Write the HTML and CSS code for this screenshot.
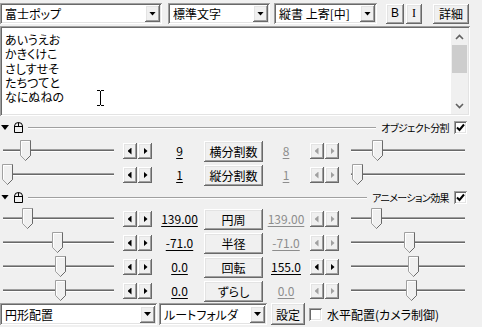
FILE: index.html
```html
<!DOCTYPE html>
<html lang="ja">
<head>
    <meta charset="UTF-8">
    <meta name="viewport" content="width=device-width, initial-scale=1.0">
    <title>テキスト</title>
    <link rel="stylesheet" href="styles.css">
</head>
<body>
    <div class="panel">
        <div class="toolbar">
            <div class="combo combo-font"><span class="combo-text">富士ポップ</span><span class="drop"><i class="tri-down"></i></span></div>
            <div class="combo combo-style"><span class="combo-text">標準文字</span><span class="drop"><i class="tri-down"></i></span></div>
            <div class="combo combo-align"><span class="combo-text">縦書 上寄[中]</span><span class="drop"><i class="tri-down"></i></span></div>
            <button class="btn btn-b">B</button>
            <button class="btn btn-i">I</button>
            <button class="btn btn-detail">詳細</button>
        </div>

        <div class="editor">
            <div class="editor-text">あいうえお<br>かきくけこ<br>さしすせそ<br>たちつてと<br>なにぬねの</div>
            <svg class="ibeam" width="7" height="16" viewBox="0 0 7 16"><path d="M0 0.5H3M4 0.5H7M3.5 1V15M0 15.5H3M4 15.5H7" fill="none" stroke="#000"/></svg>
            <div class="vscroll">
                <span class="sb-arrow"><svg width="9" height="6" viewBox="0 0 9 6"><path d="M1 5L4.5 1.5L8 5" fill="none" stroke="#606060" stroke-width="1.6"/></svg></span>
                <span class="sb-thumb"></span>
                <span class="sb-space"></span>
                <span class="sb-arrow"><svg width="9" height="6" viewBox="0 0 9 6"><path d="M1 1L4.5 4.5L8 1" fill="none" stroke="#606060" stroke-width="1.6"/></svg></span>
            </div>
        </div>

        <div class="group-head">
            <i class="tri-open"></i>
            <svg class="mouse" width="9" height="11" viewBox="0 0 9 11"><path d="M0.5 4Q0.5 0.5 4.5 0.5Q8.5 0.5 8.5 4V10.5H0.5ZM0.5 4.5H8.5M4.5 0.5V4.5" fill="none" stroke="#000"/></svg>
            <span class="rule"></span>
            <span class="group-label">オブジェクト分割</span>
            <span class="check"><svg width="9" height="9" viewBox="0 0 9 9"><path d="M1 4.5L3.5 7L8 1.5" fill="none" stroke="#000" stroke-width="2"/></svg></span>
        </div>

        <div class="row">
            <div class="slider"><span class="track"></span><svg class="thumb" style="left:20px" width="11" height="21" viewBox="0 0 11 21"><path d="M0.5 15.5V0.5H10.5V15.5L5.5 20.5Z" fill="#f0f0f0" stroke="#a0a0a0"/><path d="M10.5 0.5V15.5L5.5 20.5" fill="none" stroke="#696969"/><path d="M1.5 15V1.5H9.5" fill="none" stroke="#fff"/></svg></div>
            <span class="spin"><span class="spin-btn"><i class="tri-left"></i></span><span class="spin-btn"><i class="tri-right"></i></span></span>
            <span class="value">9</span>
            <button class="btn param">横分割数</button>
            <span class="value value-r off">8</span>
            <span class="spin off"><span class="spin-btn"><i class="tri-left"></i></span><span class="spin-btn"><i class="tri-right"></i></span></span>
            <div class="slider slider-r"><span class="track"></span><svg class="thumb" style="left:33px" width="11" height="21" viewBox="0 0 11 21"><path d="M0.5 15.5V0.5H10.5V15.5L5.5 20.5Z" fill="#f0f0f0" stroke="#a0a0a0"/><path d="M10.5 0.5V15.5L5.5 20.5" fill="none" stroke="#696969"/><path d="M1.5 15V1.5H9.5" fill="none" stroke="#fff"/></svg></div>
        </div>
        <div class="row">
            <div class="slider"><span class="track"></span><svg class="thumb" style="left:2px" width="11" height="21" viewBox="0 0 11 21"><path d="M0.5 15.5V0.5H10.5V15.5L5.5 20.5Z" fill="#f0f0f0" stroke="#a0a0a0"/><path d="M10.5 0.5V15.5L5.5 20.5" fill="none" stroke="#696969"/><path d="M1.5 15V1.5H9.5" fill="none" stroke="#fff"/></svg></div>
            <span class="spin"><span class="spin-btn"><i class="tri-left"></i></span><span class="spin-btn"><i class="tri-right"></i></span></span>
            <span class="value">1</span>
            <button class="btn param">縦分割数</button>
            <span class="value value-r off">1</span>
            <span class="spin off"><span class="spin-btn"><i class="tri-left"></i></span><span class="spin-btn"><i class="tri-right"></i></span></span>
            <div class="slider slider-r"><span class="track"></span><svg class="thumb" style="left:13px" width="11" height="21" viewBox="0 0 11 21"><path d="M0.5 15.5V0.5H10.5V15.5L5.5 20.5Z" fill="#f0f0f0" stroke="#a0a0a0"/><path d="M10.5 0.5V15.5L5.5 20.5" fill="none" stroke="#696969"/><path d="M1.5 15V1.5H9.5" fill="none" stroke="#fff"/></svg></div>
        </div>

        <div class="group-head group-head-2">
            <i class="tri-open"></i>
            <svg class="mouse" width="9" height="11" viewBox="0 0 9 11"><path d="M0.5 4Q0.5 0.5 4.5 0.5Q8.5 0.5 8.5 4V10.5H0.5ZM0.5 4.5H8.5M4.5 0.5V4.5" fill="none" stroke="#000"/></svg>
            <span class="rule"></span>
            <span class="group-label">アニメーション効果</span>
            <span class="check"><svg width="9" height="9" viewBox="0 0 9 9"><path d="M1 4.5L3.5 7L8 1.5" fill="none" stroke="#000" stroke-width="2"/></svg></span>
        </div>

        <div class="row">
            <div class="slider"><span class="track"></span><svg class="thumb" style="left:22px" width="11" height="21" viewBox="0 0 11 21"><path d="M0.5 15.5V0.5H10.5V15.5L5.5 20.5Z" fill="#f0f0f0" stroke="#a0a0a0"/><path d="M10.5 0.5V15.5L5.5 20.5" fill="none" stroke="#696969"/><path d="M1.5 15V1.5H9.5" fill="none" stroke="#fff"/></svg></div>
            <span class="spin"><span class="spin-btn"><i class="tri-left"></i></span><span class="spin-btn"><i class="tri-right"></i></span></span>
            <span class="value">139.00</span>
            <button class="btn param">円周</button>
            <span class="value value-r off">139.00</span>
            <span class="spin off"><span class="spin-btn"><i class="tri-left"></i></span><span class="spin-btn"><i class="tri-right"></i></span></span>
            <div class="slider slider-r"><span class="track"></span><svg class="thumb" style="left:32px" width="11" height="21" viewBox="0 0 11 21"><path d="M0.5 15.5V0.5H10.5V15.5L5.5 20.5Z" fill="#f0f0f0" stroke="#a0a0a0"/><path d="M10.5 0.5V15.5L5.5 20.5" fill="none" stroke="#696969"/><path d="M1.5 15V1.5H9.5" fill="none" stroke="#fff"/></svg></div>
        </div>
        <div class="row">
            <div class="slider"><span class="track"></span><svg class="thumb" style="left:52px" width="11" height="21" viewBox="0 0 11 21"><path d="M0.5 15.5V0.5H10.5V15.5L5.5 20.5Z" fill="#f0f0f0" stroke="#a0a0a0"/><path d="M10.5 0.5V15.5L5.5 20.5" fill="none" stroke="#696969"/><path d="M1.5 15V1.5H9.5" fill="none" stroke="#fff"/></svg></div>
            <span class="spin"><span class="spin-btn"><i class="tri-left"></i></span><span class="spin-btn"><i class="tri-right"></i></span></span>
            <span class="value">-71.0</span>
            <button class="btn param">半径</button>
            <span class="value value-r off">-71.0</span>
            <span class="spin off"><span class="spin-btn"><i class="tri-left"></i></span><span class="spin-btn"><i class="tri-right"></i></span></span>
            <div class="slider slider-r"><span class="track"></span><svg class="thumb" style="left:65px" width="11" height="21" viewBox="0 0 11 21"><path d="M0.5 15.5V0.5H10.5V15.5L5.5 20.5Z" fill="#f0f0f0" stroke="#a0a0a0"/><path d="M10.5 0.5V15.5L5.5 20.5" fill="none" stroke="#696969"/><path d="M1.5 15V1.5H9.5" fill="none" stroke="#fff"/></svg></div>
        </div>
        <div class="row">
            <div class="slider"><span class="track"></span><svg class="thumb" style="left:55px" width="11" height="21" viewBox="0 0 11 21"><path d="M0.5 15.5V0.5H10.5V15.5L5.5 20.5Z" fill="#f0f0f0" stroke="#a0a0a0"/><path d="M10.5 0.5V15.5L5.5 20.5" fill="none" stroke="#696969"/><path d="M1.5 15V1.5H9.5" fill="none" stroke="#fff"/></svg></div>
            <span class="spin"><span class="spin-btn"><i class="tri-left"></i></span><span class="spin-btn"><i class="tri-right"></i></span></span>
            <span class="value">0.0</span>
            <button class="btn param">回転</button>
            <span class="value value-r">155.0</span>
            <span class="spin"><span class="spin-btn"><i class="tri-left"></i></span><span class="spin-btn"><i class="tri-right"></i></span></span>
            <div class="slider slider-r"><span class="track"></span><svg class="thumb" style="left:69px" width="11" height="21" viewBox="0 0 11 21"><path d="M0.5 15.5V0.5H10.5V15.5L5.5 20.5Z" fill="#f0f0f0" stroke="#a0a0a0"/><path d="M10.5 0.5V15.5L5.5 20.5" fill="none" stroke="#696969"/><path d="M1.5 15V1.5H9.5" fill="none" stroke="#fff"/></svg></div>
        </div>
        <div class="row">
            <div class="slider"><span class="track"></span><svg class="thumb" style="left:55px" width="11" height="21" viewBox="0 0 11 21"><path d="M0.5 15.5V0.5H10.5V15.5L5.5 20.5Z" fill="#f0f0f0" stroke="#a0a0a0"/><path d="M10.5 0.5V15.5L5.5 20.5" fill="none" stroke="#696969"/><path d="M1.5 15V1.5H9.5" fill="none" stroke="#fff"/></svg></div>
            <span class="spin"><span class="spin-btn"><i class="tri-left"></i></span><span class="spin-btn"><i class="tri-right"></i></span></span>
            <span class="value">0.0</span>
            <button class="btn param">ずらし</button>
            <span class="value value-r off">0.0</span>
            <span class="spin off"><span class="spin-btn"><i class="tri-left"></i></span><span class="spin-btn"><i class="tri-right"></i></span></span>
            <div class="slider slider-r"><span class="track"></span><svg class="thumb" style="left:67px" width="11" height="21" viewBox="0 0 11 21"><path d="M0.5 15.5V0.5H10.5V15.5L5.5 20.5Z" fill="#f0f0f0" stroke="#a0a0a0"/><path d="M10.5 0.5V15.5L5.5 20.5" fill="none" stroke="#696969"/><path d="M1.5 15V1.5H9.5" fill="none" stroke="#fff"/></svg></div>
        </div>

        <div class="footer">
            <div class="combo combo-layout"><span class="combo-text">円形配置</span><span class="drop"><i class="tri-down"></i></span></div>
            <div class="combo combo-folder"><span class="combo-text">ルートフォルダ</span><span class="drop"><i class="tri-down"></i></span></div>
            <button class="btn btn-setting">設定</button>
            <span class="check check-off"></span>
            <span class="footer-label">水平配置(カメラ制御)</span>
        </div>
    </div>
</body>
</html>
```

FILE: styles.css
```css
* { margin: 0; padding: 0; box-sizing: border-box; }
body { background: #f0f0f0; color: #000; font-family: "Noto Sans CJK JP", "Noto Sans", sans-serif; font-size: 12px; font-feature-settings: "palt"; overflow: hidden; }
.panel { width: 470px; }

/* classic 3d edges */
.btn, .drop, .spin-btn { background: #f0f0f0; border: none; box-shadow: inset -1px -1px #696969, inset 1px 1px #fff, inset -2px -2px #a0a0a0, inset 2px 2px #e3e3e3; }
.combo, .editor, .check { background: #fff; box-shadow: inset 1px 1px #a0a0a0, inset -1px -1px #fff, inset 2px 2px #696969, inset -2px -2px #e3e3e3; }

.btn { font-family: inherit; font-size: 12px; font-feature-settings: "palt"; color: #000; height: 21px; line-height: 19px; text-align: center; flex: none; }

.toolbar { display: flex; align-items: center; height: 26px; padding-top: 1px; }
.combo { display: flex; align-items: center; height: 21px; padding: 2px; flex: none; }
.combo-text { flex: 1; padding-left: 3px; line-height: 17px; white-space: nowrap; overflow: hidden; }
.drop { width: 15px; height: 17px; flex: none; display: flex; align-items: center; justify-content: center; }
.tri-down { display: block; width: 7px; height: 4px; background: #000; clip-path: polygon(0 0, 100% 0, 50% 100%); }
.combo-font { width: 162px; }
.combo-style { width: 102px; margin-left: 6px; }
.combo-align { width: 103px; margin-left: 4px; }
.btn-b { width: 18px; height: 20px; margin-left: 9px; font-family: "Liberation Sans", sans-serif; }
.btn-i { width: 16px; height: 20px; margin-left: 2px; font-family: "Liberation Serif", serif; }
.btn-detail { width: 36px; height: 20px; margin-left: 11px; }

.editor { position: relative; display: flex; height: 90px; padding: 2px; }
.editor-text { flex: 1; padding: 5px 0 0 3px; line-height: 14.3px; }
.ibeam { position: absolute; left: 97px; top: 64px; }
.vscroll { width: 17px; display: flex; flex-direction: column; background: #f0f0f0; }
.sb-arrow { height: 17px; display: flex; align-items: center; justify-content: center; }
.sb-thumb { height: 28px; margin: 0 1px; background: #cdcdcd; }
.sb-space { flex: 1; }

.group-head { display: flex; align-items: center; height: 23px; }
.group-head-2 { height: 20px; }
.tri-open { display: block; width: 8px; height: 5px; margin-left: 1px; background: #000; clip-path: polygon(0 0, 100% 0, 50% 100%); }
.mouse { margin-left: 5px; flex: none; }
.rule { flex: 1; height: 2px; margin: 1px 5px 0 5px; border-top: 1px solid #a0a0a0; border-bottom: 1px solid #fff; }
.group-label { font-size: 10px; letter-spacing: -0.6px; line-height: 13px; white-space: nowrap; }
.check { width: 13px; height: 13px; margin: 0 3px 0 5px; flex: none; display: flex; align-items: center; justify-content: center; }

.row { display: flex; align-items: center; height: 24px; }
.slider { position: relative; width: 120px; height: 24px; padding: 10px 6px 0 3px; flex: none; }
.slider-r { width: 131px; padding: 10px 5px 0 12px; }
.track { display: block; height: 3px; border-top: 1px solid #a0a0a0; border-bottom: 1px solid #fff; background: #696969; }
.thumb { position: absolute; top: 1px; }

.spin { display: flex; gap: 1px; margin-left: 3px; flex: none; }
.spin-btn { width: 14px; height: 16px; display: flex; align-items: center; justify-content: center; }
.tri-left, .tri-right { display: block; width: 4px; height: 7px; background: #000; }
.tri-left { clip-path: polygon(100% 0, 100% 100%, 0 50%); margin-left: -1px; }
.tri-right { clip-path: polygon(0 0, 0 100%, 100% 50%); margin-left: 1px; }
.spin.off .tri-left, .spin.off .tri-right { background: #a0a0a0; }
.value-r + .spin { margin-left: 1px; }

.value { width: 51px; padding-left: 4px; text-align: center; text-decoration: underline; text-underline-offset: 2px; line-height: 16px; flex: none; }
.value-r { width: 46px; padding-left: 0; }
.value.off { color: #8d8d8d; }
.param { width: 59px; margin-left: 1px; }

.footer { display: flex; align-items: center; height: 22px; }
.combo-layout { width: 157px; height: 22px; }
.combo-folder { width: 108px; height: 22px; margin-left: 2px; }
.btn-setting { width: 34px; height: 22px; margin-left: 4px; }
.check-off { margin: 0 0 0 4px; }
.footer-label { margin-left: 5px; white-space: nowrap; }
```
